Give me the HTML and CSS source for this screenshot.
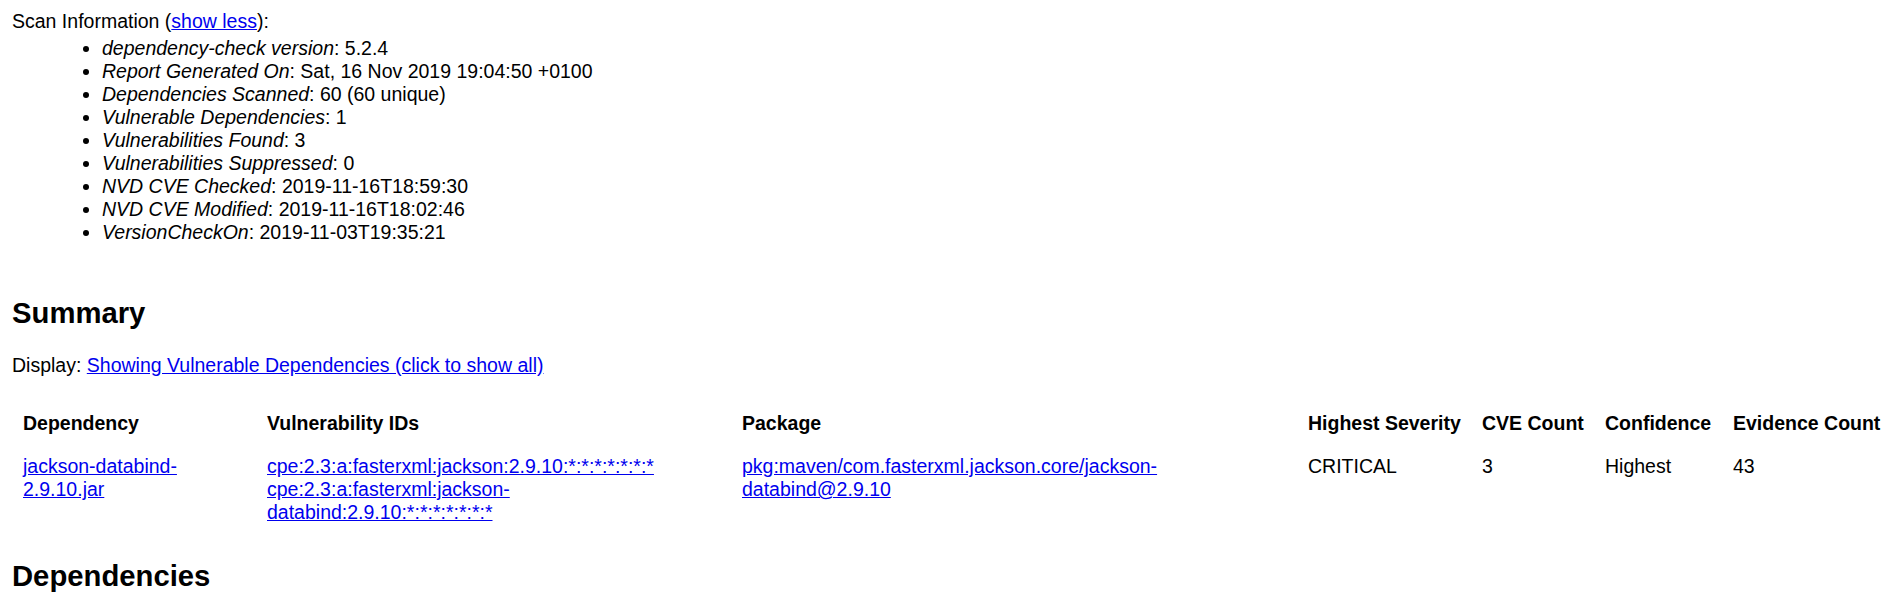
FILE: index.html
```html
<!DOCTYPE html>
<html lang="en">
<head>
<meta charset="utf-8">
<title>Dependency-Check Report</title>
<link rel="stylesheet" href="styles.css">
</head>
<body>
<div class="wrapper">
  <div class="scaninfo">Scan Information (<a href="#" class="link">show less</a>):</div>
  <ul class="indent">
    <li><i>dependency-check version</i>: 5.2.4</li>
    <li><i>Report Generated On</i>: Sat, 16 Nov 2019 19:04:50 +0100</li>
    <li><i>Dependencies Scanned</i>:&nbsp;60 (60 unique)</li>
    <li><i>Vulnerable Dependencies</i>:&nbsp;1</li>
    <li><i>Vulnerabilities Found</i>:&nbsp;3</li>
    <li><i>Vulnerabilities Suppressed</i>:&nbsp;0</li>
    <li><i>NVD CVE Checked</i>: 2019-11-16T18:59:30</li>
    <li><i>NVD CVE Modified</i>: 2019-11-16T18:02:46</li>
    <li><i>VersionCheckOn</i>: 2019-11-03T19:35:21</li>
  </ul>

  <h2 class="section-title">Summary</h2>
  <div class="display">Display: <a href="#" class="link">Showing Vulnerable Dependencies (click to show all)</a></div>

  <table class="summary">
    <colgroup>
      <col class="c-dep">
      <col class="c-ids">
      <col class="c-pkg">
      <col class="c-sev">
      <col class="c-cve">
      <col class="c-conf">
      <col class="c-evid">
    </colgroup>
    <thead>
      <tr>
        <th>Dependency</th>
        <th>Vulnerability IDs</th>
        <th>Package</th>
        <th>Highest Severity</th>
        <th>CVE Count</th>
        <th>Confidence</th>
        <th>Evidence Count</th>
      </tr>
    </thead>
    <tbody>
      <tr>
        <td><a href="#" class="link">jackson-databind-2.9.10.jar</a></td>
        <td><a href="#" class="link">cpe:2.3:a:fasterxml:jackson:2.9.10:*:*:*:*:*:*:*</a><br><a href="#" class="link">cpe:2.3:a:fasterxml:jackson-databind:2.9.10:*:*:*:*:*:*:*</a></td>
        <td><a href="#" class="link">pkg:maven/com.fasterxml.jackson.core/jackson-databind@2.9.10</a></td>
        <td>CRITICAL</td>
        <td>3</td>
        <td>Highest</td>
        <td>43</td>
      </tr>
    </tbody>
  </table>

  <h2 class="section-title">Dependencies</h2>
</div>
</body>
</html>
```

FILE: styles.css
```css
html, body {
  margin: 0;
  padding: 0;
  background: #ffffff;
}

body {
  font-family: "Liberation Sans", Arial, Helvetica, sans-serif;
  font-size: 19.5px;
  line-height: 23px;
  color: #000000;
}

.wrapper {
  padding: 9.5px 12px 0 12px;
}

.link {
  color: #0000ee;
  text-decoration: underline;
}

.scaninfo {
  margin: 0;
}

.indent {
  margin: 4.5px 0 51.8px 0;
  padding: 0 0 0 90px;
  list-style: disc outside;
}

.section-title {
  font-size: 29.25px;
  line-height: 34px;
  font-weight: bold;
  margin: 24.3px 0;
}

.display {
  margin: 0;
}

.summary {
  width: 100%;
  table-layout: fixed;
  border-collapse: separate;
  border-spacing: 0;
  margin-top: 25px;
}

.c-dep { width: 244px; }
.c-ids { width: 475px; }
.c-pkg { width: 566px; }
.c-sev { width: 174px; }
.c-cve { width: 123px; }
.c-conf { width: 128px; }
.c-evid { width: 170px; }

.summary th,
.summary td {
  padding: 10px 11px 11px 11px;
  text-align: left;
  vertical-align: top;
}

.summary th {
  font-weight: bold;
  white-space: nowrap;
  padding-bottom: 10px;
}
```
